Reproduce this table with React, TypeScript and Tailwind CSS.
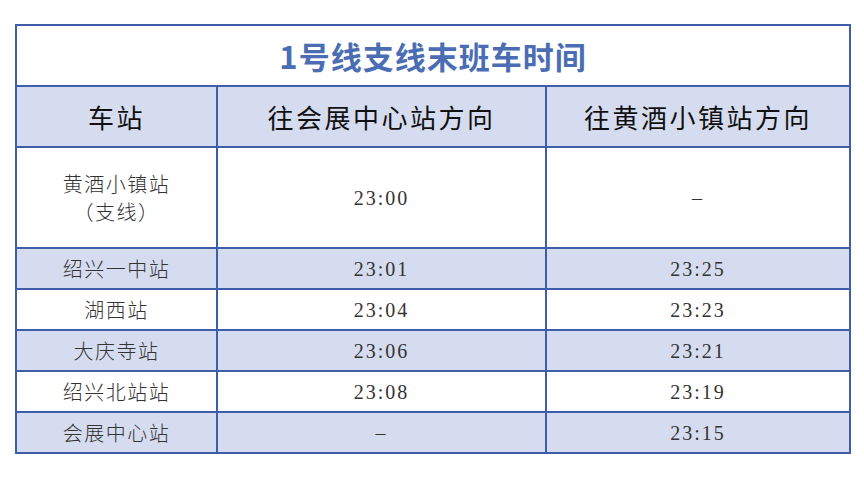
import React from 'react';

const rows = [
  { station: ['黄酒小镇站', '（支线）'], a: '23:00', b: '–', tall: true },
  { station: ['绍兴一中站'], a: '23:01', b: '23:25' },
  { station: ['湖西站'], a: '23:04', b: '23:23' },
  { station: ['大庆寺站'], a: '23:06', b: '23:21' },
  { station: ['绍兴北站站'], a: '23:08', b: '23:19' },
  { station: ['会展中心站'], a: '–', b: '23:15' },
];

const cjk = "font-['Noto_Sans_CJK_SC',sans-serif]";
const serif = "font-['Liberation_Serif','Noto_Sans_CJK_SC',serif]";

export default function App() {
  return (
    <div className="w-[864px] h-[482px] bg-white pt-[24px] pl-[15px]">
      <table className="w-[834px] border-collapse border-2 border-[#3f5ea9] table-fixed">
        <colgroup>
          <col className="w-[201px]" />
          <col className="w-[329px]" />
          <col className="w-[304px]" />
        </colgroup>
        <thead>
          <tr className="h-[61px]">
            <th
              colSpan={3}
              className={`${cjk} border-2 border-[#3f5ea9] text-[31px] font-bold text-[#4a6db4] tracking-[1px] pt-[2px]`}
            >
              1号线支线末班车时间
            </th>
          </tr>
          <tr className="h-[61px] bg-[#d6dcef]">
            <th className={`${cjk} border-2 border-[#3f5ea9] text-[26px] font-normal text-[#111] tracking-[2.5px]`}>车站</th>
            <th className={`${cjk} border-2 border-[#3f5ea9] text-[26px] font-normal text-[#111] tracking-[2.5px]`}>往会展中心站方向</th>
            <th className={`${cjk} border-2 border-[#3f5ea9] text-[26px] font-normal text-[#111] tracking-[2.5px]`}>往黄酒小镇站方向</th>
          </tr>
        </thead>
        <tbody>
          {rows.map((r, i) => (
            <tr key={i} className={`${r.tall ? 'h-[101px]' : 'h-[41px]'} ${i % 2 === 1 ? 'bg-[#d6dcef]' : 'bg-white'}`}>
              <td className={`${cjk} border-2 border-[#3f5ea9] text-center text-[20px] leading-[28px] text-[#333] font-light tracking-[1.5px]`}>
                {r.station.map((s) => (
                  <div key={s}>{s}</div>
                ))}
              </td>
              <td className={`${serif} border-2 border-[#3f5ea9] text-center text-[20px] text-[#333] tracking-[2px]`}>{r.a}</td>
              <td className={`${serif} border-2 border-[#3f5ea9] text-center text-[20px] text-[#333] tracking-[2px]`}>{r.b}</td>
            </tr>
          ))}
        </tbody>
      </table>
    </div>
  );
}
